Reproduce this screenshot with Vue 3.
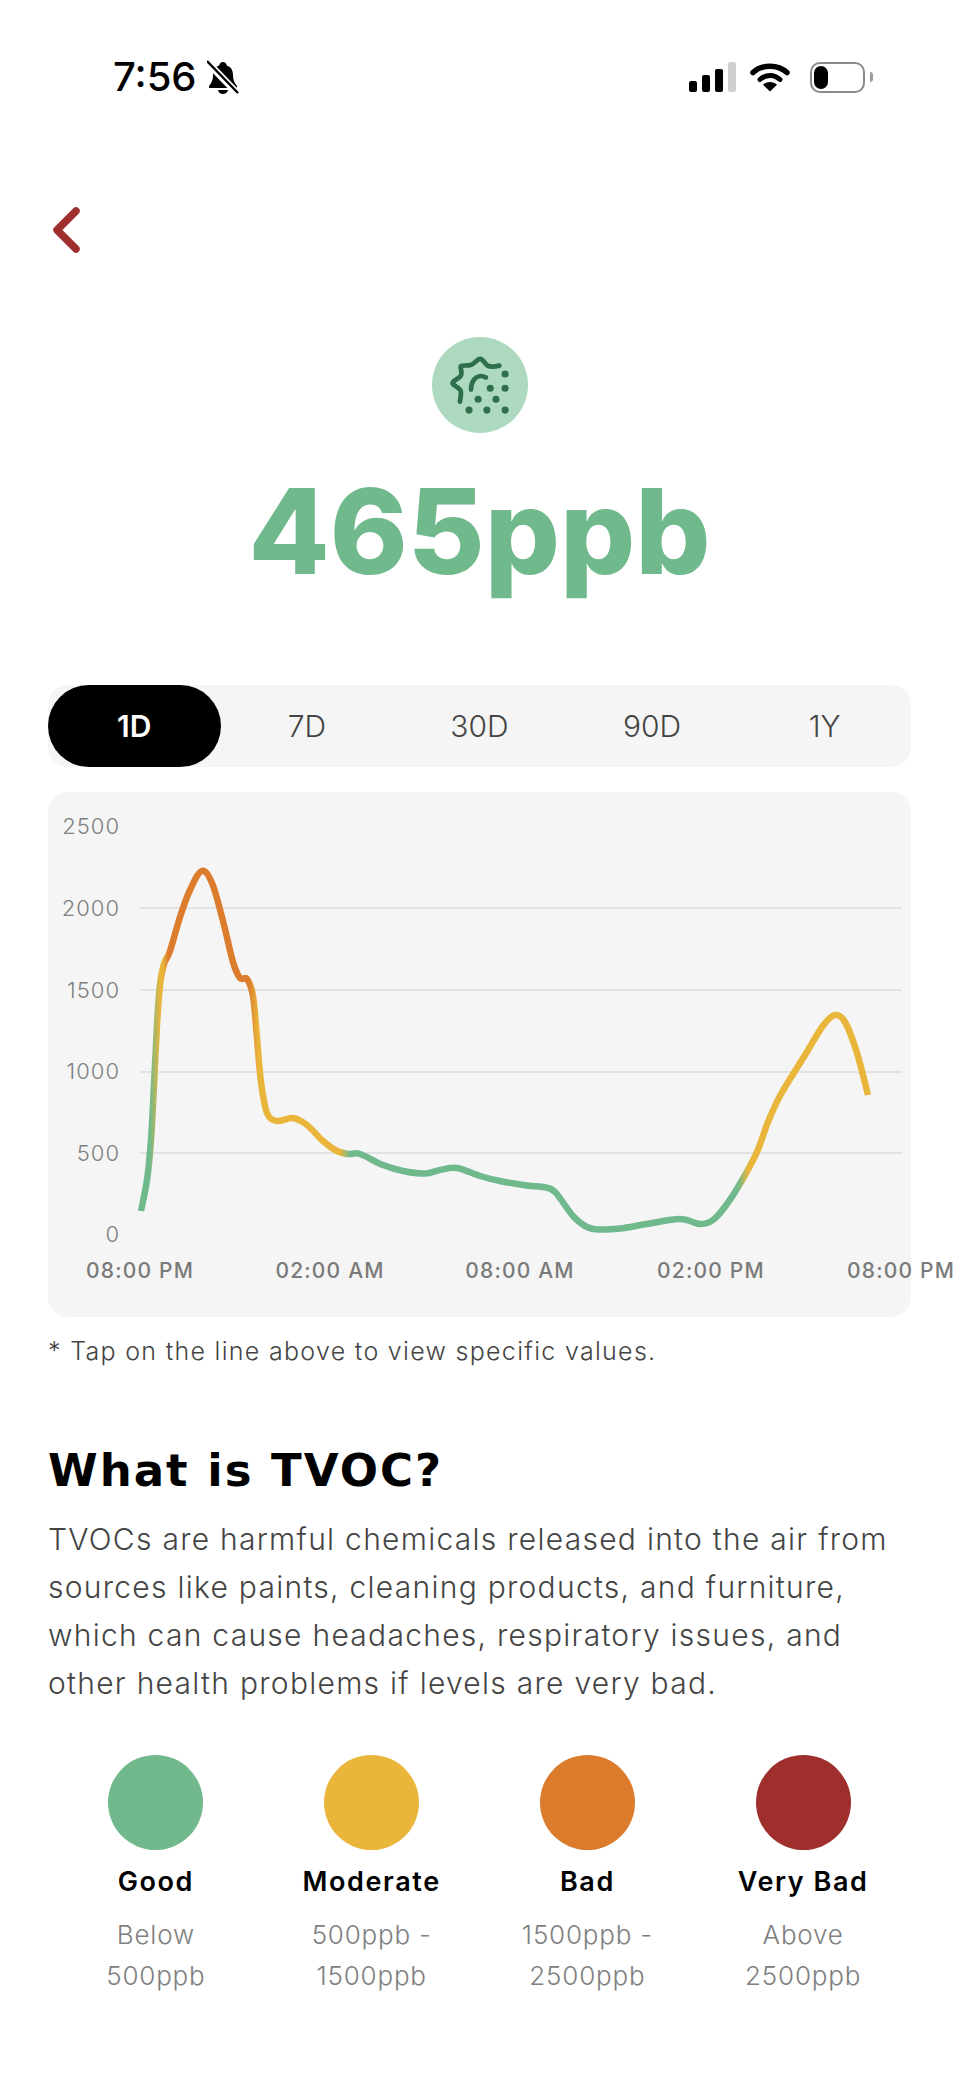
<template>
  <div class="screen">
    <!-- status bar -->
    <div class="status-bar">
      <div class="status-left">
        <span class="clock">7:56</span>
        <svg class="bell" width="32" height="35" viewBox="0 0 32 35">
          <path d="M16 2c-2 0-3.500 1.500-3.800 3.500C7.500 7 6 11 6 15c0 5-1.500 8-4 11v2h28v-2c-2.500-3-4-6-4-11 0-4-1.500-8-6.200-9.500C19.500 3.500 18 2 16 2z" fill="#000"/>
          <path d="M11 30h10c-.5 2.500-2.500 4-5 4s-4.500-1.500-5-4z" fill="#000"/>
          <path d="M1 3l30 31" stroke="#fff" stroke-width="7"/>
          <path d="M0 1l31 32" stroke="#000" stroke-width="2.400"/>
        </svg>
      </div>
      <div class="status-right">
        <div class="signal">
          <i class="b1"></i><i class="b2"></i><i class="b3"></i><i class="b4"></i>
        </div>
        <svg width="40" height="30" viewBox="0 0 40 30">
          <path d="M3 10.500C12 2 28 2 37 10.500" fill="none" stroke="#000" stroke-width="5.500" stroke-linecap="round"/>
          <path d="M10 17.500c6-5.500 14-5.500 20 0" fill="none" stroke="#000" stroke-width="5" stroke-linecap="round"/>
          <path d="M20 29.500l-7-6.800c4-3.500 10-3.500 14 0z" fill="#000"/>
        </svg>
        <div class="battery">
          <div class="battery-body"><div class="battery-level"></div></div>
          <div class="battery-nub"></div>
        </div>
      </div>
    </div>

    <!-- back button -->
    <div class="back">
      <svg width="30" height="46" viewBox="0 0 30 46">
        <path d="M25 4L6 23l19 19" fill="none" stroke="#9e2f2d" stroke-width="7.500" stroke-linecap="round" stroke-linejoin="round"/>
      </svg>
    </div>

    <!-- current value -->
    <div class="hero">
      <svg class="hero-icon" width="96" height="96" viewBox="155 55 285 285">
        <circle cx="297.500" cy="197.500" r="142.500" fill="#acd9c0"/>
        <path d="M355 140c-15 4-26 5-35 0-8-4-12-20-23-20-9 0-14 15-27 18-12 3-30 0-30 5 0 10 6 20 0 28-7 8-24 15-24 21s20 12 24 22c3 9-1 22-2 33" fill="none" stroke="#2e6e4b" stroke-width="14" stroke-linecap="round" stroke-linejoin="round"/>
        <path d="M315 175c-12-6-26-5-34 5-7 8-10 18-10 31" fill="none" stroke="#2e6e4b" stroke-width="14" stroke-linecap="round"/>
        <circle v-for="(d, i) in dots" :key="i" :cx="d[0]" :cy="d[1]" r="10.500" fill="#2e6e4b"/>
      </svg>
      <div class="value">465ppb</div>
    </div>

    <!-- range tabs -->
    <div class="tabs">
      <div v-for="t in ranges" :key="t" class="tab" :class="{ active: t === current }">{{ t }}</div>
    </div>

    <!-- chart, drawn in page coordinates -->
    <div class="chart-card">
      <svg class="chart" width="863" height="525" viewBox="48 792 863 525">
        <defs>
          <linearGradient id="lineColor" gradientUnits="userSpaceOnUse" x1="141" y1="0" x2="868" y2="0">
            <stop v-for="s in stops" :key="s.x" :offset="(s.x - 141) / 727" :stop-color="s.c"/>
          </linearGradient>
        </defs>
        <line v-for="y in gridLines" :key="y" x1="140" x2="902" :y1="y" :y2="y" stroke="#e2e2e2" stroke-width="2"/>
        <text v-for="l in yLabels" :key="l.t" class="y-label" x="120" :y="l.y" text-anchor="end">{{ l.t }}</text>
        <text v-for="(l, i) in xLabels" :key="i" class="x-label" :x="l.x" y="1278" text-anchor="middle">{{ l.t }}</text>
        <path :d="linePath" fill="none" stroke="url(#lineColor)" stroke-width="6.500" stroke-linejoin="round"/>
      </svg>
    </div>

    <p class="note">* Tap on the line above to view specific values.</p>

    <h2>What is TVOC?</h2>
    <p class="desc">TVOCs are harmful chemicals released into the air from sources like paints, cleaning products, and furniture, which can cause headaches, respiratory issues, and other health problems if levels are very bad.</p>

    <!-- legend -->
    <div class="legend">
      <div v-for="l in legend" :key="l.name" class="legend-item">
        <div class="dot" :style="{ background: l.color }"></div>
        <div class="legend-name">{{ l.name }}</div>
        <div class="legend-range">{{ l.line1 }}<br />{{ l.line2 }}</div>
      </div>
    </div>
  </div>
</template>

<script setup>
import { computed, ref } from 'vue'

const ranges = ['1D', '7D', '30D', '90D', '1Y']
const current = ref('1D')

const dots = [[372, 165], [328, 207], [372, 207], [292, 240], [345, 240], [265, 272], [318, 272], [372, 272]]

const gridLines = [908, 990, 1072, 1153]
const yLabels = [
  { t: '2500', y: 834 },
  { t: '2000', y: 916 },
  { t: '1500', y: 998 },
  { t: '1000', y: 1079 },
  { t: '500', y: 1161 },
  { t: '0', y: 1242 }
]
const xLabels = [
  { t: '08:00 PM', x: 140 },
  { t: '02:00 AM', x: 330 },
  { t: '08:00 AM', x: 520 },
  { t: '02:00 PM', x: 711 },
  { t: '08:00 PM', x: 901 }
]

const stops = [
  { x: 141, c: '#6fb98c' },
  { x: 150, c: '#6fb98c' },
  { x: 160, c: '#e9b53a' },
  { x: 163, c: '#e9b53a' },
  { x: 168, c: '#dc7d2e' },
  { x: 249, c: '#dc7d2e' },
  { x: 258, c: '#e9b53a' },
  { x: 340, c: '#e9b53a' },
  { x: 350, c: '#6fb98c' },
  { x: 738, c: '#6fb98c' },
  { x: 748, c: '#e9b53a' },
  { x: 868, c: '#e9b53a' }
]

// traced points of the line
const points = [
  [141, 1211], [147, 1180], [151, 1140], [154, 1085], [157, 1025], [160, 985], [164, 964], [170, 951], [180, 917],
  [190, 890], [201.7, 871], [212, 883], [223, 921], [233, 962], [240, 978], [247, 979], [253, 996],
  [257, 1038], [261, 1082], [267, 1113], [277, 1121], [293, 1118], [307, 1125], [323, 1141], [337, 1151],
  [348, 1154], [360, 1154], [383, 1165], [403, 1171], [425, 1173.5], [440, 1170], [457, 1168], [480, 1176],
  [500, 1181], [527, 1185.5], [543, 1187], [555, 1192], [573, 1216], [587, 1227], [600, 1229.5], [620, 1228.5],
  [647, 1224], [680, 1219], [700, 1224], [713, 1220], [727, 1204], [743, 1178.6], [757, 1152], [768, 1122],
  [781, 1094], [805, 1055], [823, 1025.7], [835, 1015], [845, 1022], [857, 1053], [868, 1095]
]

// catmull-rom to bezier so the line stays smooth
const linePath = computed(() => {
  let d = `M${points[0][0]} ${points[0][1]}`
  for (let i = 0; i < points.length - 1; i++) {
    const p0 = points[i - 1] || points[i]
    const p1 = points[i]
    const p2 = points[i + 1]
    const p3 = points[i + 2] || p2
    const c1x = p1[0] + (p2[0] - p0[0]) / 6
    const c1y = p1[1] + (p2[1] - p0[1]) / 6
    const c2x = p2[0] - (p3[0] - p1[0]) / 6
    const c2y = p2[1] - (p3[1] - p1[1]) / 6
    d += `C${c1x.toFixed(1)} ${c1y.toFixed(1)} ${c2x.toFixed(1)} ${c2y.toFixed(1)} ${p2[0]} ${p2[1]}`
  }
  return d
})

const legend = [
  { name: 'Good', color: '#72b88d', line1: 'Below', line2: '500ppb' },
  { name: 'Moderate', color: '#e9b53a', line1: '500ppb -', line2: '1500ppb' },
  { name: 'Bad', color: '#db7c2d', line1: '1500ppb -', line2: '2500ppb' },
  { name: 'Very Bad', color: '#9e2f2d', line1: 'Above', line2: '2500ppb' }
]
</script>

<style scoped>
.screen {
  width: 959px;
  height: 2085px;
  background: #fff;
  box-sizing: border-box;
  padding: 0 48px;
  overflow: hidden;
  font-family: Inter, "Liberation Sans", sans-serif;
}

.status-bar {
  display: flex;
  justify-content: space-between;
  align-items: center;
  height: 34px;
  padding: 60px 38px 0 65px;
}

.status-left {
  display: flex;
  align-items: center;
  gap: 10px;
}

.clock {
  font-size: 40px;
  font-weight: 500;
  line-height: 34px;
  color: #000;
}

.status-right {
  display: flex;
  align-items: center;
  gap: 14px;
}

.signal {
  display: flex;
  align-items: flex-end;
  gap: 5px;
  height: 30px;
}

.signal i {
  display: block;
  width: 8px;
  background: #000;
  border-radius: 2px;
}

.signal .b1 { height: 11px; }
.signal .b2 { height: 17px; }
.signal .b3 { height: 23px; }
.signal .b4 { height: 30px; background: #cfcfcf; }

.battery {
  display: flex;
  align-items: center;
  gap: 5px;
  margin-left: 6px;
}

.battery-body {
  width: 55px;
  height: 31px;
  box-sizing: border-box;
  border: 2px solid #8a8a8a;
  border-radius: 10px;
  padding: 2px;
}

.battery-level {
  width: 14px;
  height: 100%;
  background: #000;
  border-radius: 7px;
}

.battery-nub {
  width: 3px;
  height: 10px;
  background: #9a9a9a;
  border-radius: 0 3px 3px 0;
}

.back {
  margin-top: 113px;
  height: 46px;
  padding-left: 3px;
}

.hero {
  display: flex;
  flex-direction: column;
  align-items: center;
  margin-top: 84px;
}

.value {
  margin-top: 27px;
  font-size: 118px;
  font-weight: 800;
  line-height: 143px;
  color: #6fb98c;
}

.tabs {
  display: grid;
  grid-template-columns: repeat(5, 1fr);
  height: 82px;
  margin-top: 82px;
  background: #f5f5f5;
  border-radius: 20px;
}

.tab {
  display: flex;
  align-items: center;
  justify-content: center;
  font-size: 30px;
  font-weight: 300;
  color: #444;
}

.tab.active {
  background: #000;
  color: #fff;
  font-weight: 600;
  border-radius: 41px;
}

.chart-card {
  height: 525px;
  margin-top: 25px;
  background: #f5f5f5;
  border-radius: 20px;
}

.chart {
  display: block;
  overflow: visible;
}

.y-label {
  font-size: 22px;
  font-weight: 300;
  letter-spacing: 1px;
  fill: #808080;
}

.x-label {
  font-size: 21px;
  font-weight: 500;
  letter-spacing: 1.2px;
  fill: #7a7a7a;
}

.note {
  margin: 18px 0 0;
  font-size: 25px;
  font-weight: 300;
  letter-spacing: 1.3px;
  line-height: 32px;
  color: #444;
}

h2 {
  margin: 77px 0 0;
  font-family: "DejaVu Sans", sans-serif;
  font-size: 45px;
  font-weight: 700;
  letter-spacing: 2px;
  line-height: 54px;
  color: #000;
}

.desc {
  margin: 17px 0 0;
  font-size: 30px;
  font-weight: 300;
  letter-spacing: 1.27px;
  line-height: 48px;
  color: #444;
}

.legend {
  display: grid;
  grid-template-columns: repeat(4, 1fr);
  margin-top: 48px;
}

.legend-item {
  display: flex;
  flex-direction: column;
  align-items: center;
}

.dot {
  width: 95px;
  height: 95px;
  border-radius: 50%;
}

.legend-name {
  margin-top: 10px;
  font-size: 27px;
  font-weight: 600;
  letter-spacing: 1.6px;
  line-height: 44px;
  color: #000;
}

.legend-range {
  margin-top: 10px;
  font-size: 26px;
  font-weight: 300;
  letter-spacing: 0.8px;
  line-height: 41px;
  color: #808080;
  text-align: center;
}
</style>
